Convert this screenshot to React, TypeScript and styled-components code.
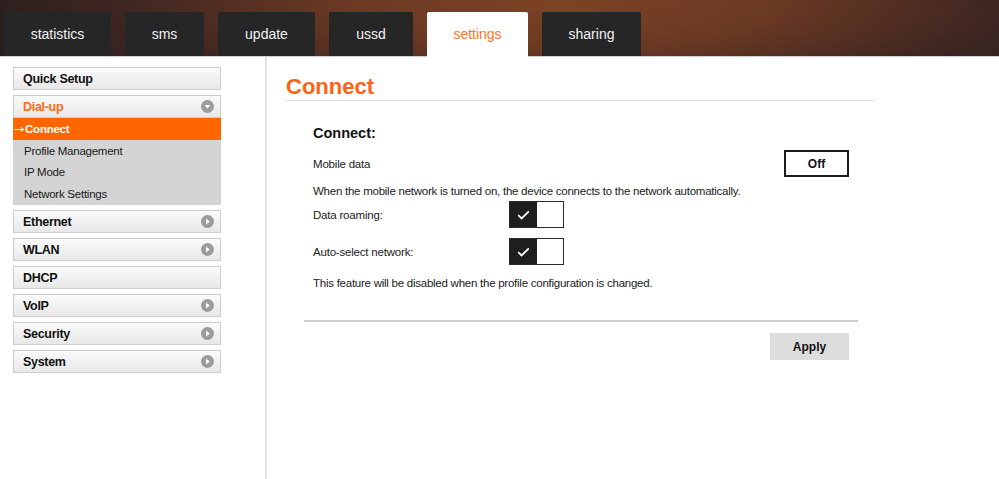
import React, { FC } from "react";
import styled, { createGlobalStyle } from "styled-components";

const GlobalStyle = createGlobalStyle`
	html, body {
		margin: 0;
		padding: 0;
		background: #fff;
		font-family: "Liberation Sans", Arial, sans-serif;
		color: #222;
	}
`;

const Page = styled.div`
	width: 999px;
	min-height: 479px;
	display: flex;
	flex-direction: column;
`;

const Header = styled.header`
	height: 57px;
	border-bottom: 1px solid #cfcfcf;
	background: radial-gradient(
		ellipse 620px 140px at 560px 0px,
		#7d4325 0%,
		#6a3923 35%,
		#3f2621 70%,
		#241d1e 100%
	);
	display: flex;
	align-items: flex-end;
	gap: 14px;
	padding-left: 4px;
	box-sizing: border-box;
`;

const Tab = styled.div<{ $active?: boolean; $w: number }>`
	width: ${(p) => p.$w}px;
	height: 44px;
	display: flex;
	align-items: center;
	justify-content: center;
	border-radius: 2px 2px 0 0;
	background: ${(p) => (p.$active ? "#fff" : "#262626")};
	color: ${(p) => (p.$active ? "#ff7428" : "#f2f2f2")};
	font-size: 14px;
	padding-bottom: 1px;
	box-sizing: border-box;
	${(p) => (p.$active ? "margin-bottom: -1px; height: 45px;" : "")}
`;

const Body = styled.div`
	flex: 1;
	display: flex;
`;

const Sidebar = styled.nav`
	width: 267px;
	min-height: 422px;
	border-right: 2px solid #e2e2e2;
	padding: 10px 0 0 13px;
	box-sizing: border-box;
	display: flex;
	flex-direction: column;
	gap: 5px;
`;

const MenuGroup = styled.div`
	width: 208px;
`;

const MenuItem = styled.div<{ $open?: boolean }>`
	height: 23px;
	box-sizing: border-box;
	border: 1px solid #cdcdcd;
	background: linear-gradient(#fafafa, #e8e8e8);
	display: flex;
	align-items: center;
	justify-content: space-between;
	padding: 0 6px 0 9px;
	font-size: 12.5px;
	letter-spacing: -0.3px;
	font-weight: bold;
	color: ${(p) => (p.$open ? "#ff6a12" : "#111")};
`;

const SubMenu = styled.div`
	background: #d4d4d4;
	display: flex;
	flex-direction: column;
`;

const SubItem = styled.div<{ $active?: boolean }>`
	height: 21.75px;
	display: flex;
	align-items: center;
	padding-left: ${(p) => (p.$active ? "1px" : "11px")};
	font-size: 11.5px;
	letter-spacing: -0.25px;
	font-weight: ${(p) => (p.$active ? "bold" : "normal")};
	background: ${(p) => (p.$active ? "#ff6600" : "transparent")};
	color: ${(p) => (p.$active ? "#fff" : "#1a1a1a")};
`;

const SubArrow = styled.span`
	font-family: "DejaVu Sans", sans-serif;
	font-weight: normal;
	font-size: 12px;
	letter-spacing: 0;
	margin-right: 1px;
`;

const Main = styled.main`
	padding: 17px 0 0 19px;
	width: 588px;
`;

const Title = styled.h1`
	margin: 0;
	height: 27px;
	line-height: 26px;
	font-size: 22px;
	font-weight: bold;
	color: #ff6214;
	border-bottom: 1px solid #e0e0e0;
	box-sizing: border-box;
`;

const Section = styled.section`
	margin: 23px 16px 0 18px;
	display: flex;
	flex-direction: column;
`;

const Inner = styled.div`
	padding: 0 9px;
	display: flex;
	flex-direction: column;
`;

const Heading = styled.h2`
	margin: 0;
	font-size: 14.5px;
	line-height: 18px;
	font-weight: bold;
	color: #111;
`;

const Row = styled.div<{ $mt: number }>`
	margin-top: ${(p) => p.$mt}px;
	display: flex;
	align-items: center;
	justify-content: space-between;
`;

const FieldRow = styled.div<{ $mt: number }>`
	margin-top: ${(p) => p.$mt}px;
	display: flex;
	align-items: center;
`;

const Label = styled.span<{ $w?: number }>`
	font-size: 11.5px;
	letter-spacing: -0.2px;
	color: #222;
	${(p) => (p.$w ? `width: ${p.$w}px;` : "")}
`;

const Note = styled.p<{ $mt: number }>`
	margin: ${(p) => p.$mt}px 0 0;
	font-size: 11.5px;
	letter-spacing: -0.25px;
	line-height: 14px;
	color: #222;
`;

const OffButton = styled.button`
	width: 65px;
	height: 27px;
	border: 2px solid #1c1c1c;
	background: #fff;
	font-family: inherit;
	font-size: 12px;
	font-weight: bold;
	color: #111;
	padding: 0;
`;

const Switch = styled.div`
	width: 55px;
	height: 27px;
	border: 1px solid #2a2a2a;
	box-sizing: border-box;
	display: flex;
`;

const SwitchOn = styled.div`
	width: 27px;
	background: #1e1e1e;
	display: flex;
	align-items: center;
	justify-content: center;
`;

const SwitchOff = styled.div`
	flex: 1;
	background: #fff;
`;

const Divider = styled.hr`
	margin: 30px 0 0;
	border: 0;
	height: 2px;
	background: #d0d0d0;
`;

const Actions = styled.div`
	margin-top: 11px;
	padding-right: 9px;
	display: flex;
	justify-content: flex-end;
`;

const ApplyButton = styled.button`
	width: 79px;
	height: 27px;
	border: 0;
	background: #dddddd;
	font-family: inherit;
	font-size: 12px;
	font-weight: bold;
	color: #111;
`;

const ArrowIcon: FC<{ down?: boolean }> = ({ down }) => (
	<svg width="13" height="13" viewBox="0 0 13 13">
		<circle cx="6.5" cy="6.5" r="6.5" fill="#9b9b9b" />
		{down ? (
			<polygon points="3.5,5 9.5,5 6.5,8.6" fill="#fff" />
		) : (
			<polygon points="5,3.5 5,9.5 8.8,6.5" fill="#fff" />
		)}
	</svg>
);

const CheckIcon: FC = () => (
	<svg width="13" height="10" viewBox="0 0 13 10">
		<polyline
			points="1.2,5.2 4.6,8.4 11.8,1.4"
			fill="none"
			stroke="#fff"
			strokeWidth="1.8"
		/>
	</svg>
);

const Toggle: FC = () => (
	<Switch>
		<SwitchOn>
			<CheckIcon />
		</SwitchOn>
		<SwitchOff />
	</Switch>
);

const tabs = [
	{ name: "statistics", w: 107 },
	{ name: "sms", w: 79 },
	{ name: "update", w: 97 },
	{ name: "ussd", w: 84 },
	{ name: "settings", w: 101, active: true },
	{ name: "sharing", w: 99 },
];

const menu: { name: string; arrow?: boolean }[] = [
	{ name: "Ethernet", arrow: true },
	{ name: "WLAN", arrow: true },
	{ name: "DHCP" },
	{ name: "VoIP", arrow: true },
	{ name: "Security", arrow: true },
	{ name: "System", arrow: true },
];

const App: FC = () => {
	return (
		<Page>
			<GlobalStyle />
			<Header>
				{tabs.map((t) => (
					<Tab key={t.name} $w={t.w} $active={t.active}>
						{t.name}
					</Tab>
				))}
			</Header>
			<Body>
				<Sidebar>
					<MenuGroup>
						<MenuItem>Quick Setup</MenuItem>
					</MenuGroup>
					<MenuGroup>
						<MenuItem $open>
							Dial-up
							<ArrowIcon down />
						</MenuItem>
						<SubMenu>
							<SubItem $active>
								<SubArrow>&rarr;</SubArrow>Connect
							</SubItem>
							<SubItem>Profile Management</SubItem>
							<SubItem>IP Mode</SubItem>
							<SubItem>Network Settings</SubItem>
						</SubMenu>
					</MenuGroup>
					{menu.map((m) => (
						<MenuGroup key={m.name}>
							<MenuItem>
								{m.name}
								{m.arrow && <ArrowIcon />}
							</MenuItem>
						</MenuGroup>
					))}
				</Sidebar>
				<Main>
					<Title>Connect</Title>
					<Section>
						<Inner>
							<Heading>Connect:</Heading>
							<Row $mt={8}>
								<Label>Mobile data</Label>
								<OffButton>Off</OffButton>
							</Row>
							<Note $mt={7}>
								When the mobile network is turned on, the device connects to the network
								automatically.
							</Note>
							<FieldRow $mt={3}>
								<Label $w={196}>Data roaming:</Label>
								<Toggle />
							</FieldRow>
							<FieldRow $mt={10}>
								<Label $w={196}>Auto-select network:</Label>
								<Toggle />
							</FieldRow>
							<Note $mt={11}>
								This feature will be disabled when the profile configuration is changed.
							</Note>
						</Inner>
						<Divider />
						<Actions>
							<ApplyButton>Apply</ApplyButton>
						</Actions>
					</Section>
				</Main>
			</Body>
		</Page>
	);
};

export default App;
